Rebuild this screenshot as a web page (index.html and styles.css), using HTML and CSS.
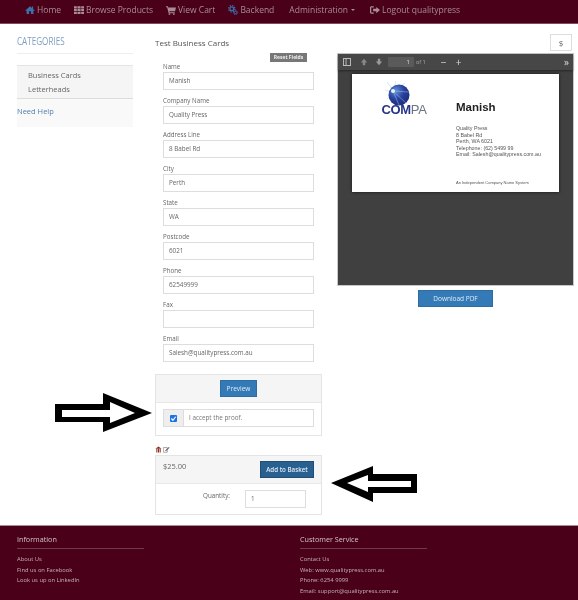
FILE: index.html
```html
<!DOCTYPE html>
<html>
<head>
    <title>Test Business Cards</title>
    <link rel="stylesheet" href="styles.css">
</head>
<body>
    <nav class="topnav">
        <a href="#"><svg class="ico blue" viewBox="0 0 16 16"><path d="M8 2 0 9h2.500v5.500h4V10h3v4.500h4V9H16L13 6.400V2.500h-2v2.200z"/></svg>Home</a>
        <a href="#"><svg class="ico" viewBox="0 0 16 16"><path d="M0 2h4.500v3.500H0zM5.500 2h5v3.500h-5zM11.500 2H16v3.500h-4.500zM0 6.500h4.500V10H0zM5.500 6.500h5V10h-5zM11.500 6.500H16V10h-4.500zM0 11h4.500v3.500H0zM5.500 11h5v3.500h-5zM11.500 11H16v3.500h-4.500z"/></svg>Browse Products</a>
        <a href="#"><svg class="ico" viewBox="0 0 16 16"><path d="M0 2h3l.6 2H16l-1.500 6H5.200l.4 1.500H14V13H4.200L1.800 3.500H0z"/><circle cx="5.500" cy="14.500" r="1.400"/><circle cx="12.500" cy="14.500" r="1.400"/></svg>View Cart</a>
        <a href="#"><svg class="ico cogs" viewBox="0 0 16 16">
            <circle cx="6" cy="6" r="3" fill="none" stroke="#3f6fa8" stroke-width="2"/>
            <circle cx="6" cy="6" r="5" fill="none" stroke="#3f6fa8" stroke-width="2" stroke-dasharray="2 1.930"/>
            <circle cx="12" cy="12" r="2" fill="none" stroke="#3f6fa8" stroke-width="1.500"/>
            <circle cx="12" cy="12" r="3.400" fill="none" stroke="#3f6fa8" stroke-width="1.500" stroke-dasharray="1.500 1.170"/>
        </svg>Backend</a>
        <a href="#" class="admin">Administration <span class="caret"></span></a>
        <a href="#"><svg class="ico" viewBox="0 0 16 16"><path d="M6 2H1.500L0 3.500v9L1.500 14H6v-2H2V4h4z"/><path d="M10 3v3H5v4h5v3l6-5z"/></svg>Logout qualitypress</a>
    </nav>

    <div class="main">
        <aside class="sidebar">
            <h3><span>CATEGORIES</span></h3>
            <div class="side-box">
                <ul class="cat-list">
                    <li>Business Cards</li>
                    <li>Letterheads</li>
                </ul>
                <a href="#" class="need-help">Need Help</a>
            </div>
        </aside>

        <section class="middle">
            <h4>Test Business Cards</h4>
            <div class="reset-row"><span class="reset">Reset Fields</span></div>
            <form class="fields">
                <label>Name<span class="input">Manish</span></label>
                <label>Company Name<span class="input">Quality Press</span></label>
                <label>Address Line<span class="input">8 Babel Rd</span></label>
                <label>City<span class="input">Perth</span></label>
                <label>State<span class="input">WA</span></label>
                <label>Postcode<span class="input">6021</span></label>
                <label>Phone<span class="input">62549999</span></label>
                <label>Fax<span class="input"></span></label>
                <label>Email<span class="input">Salesh@qualitypress.com.au</span></label>
            </form>

            <div class="panel proof">
                <div class="panel-head center"><button class="btn">Preview</button></div>
                <div class="panel-body">
                    <div class="input-group">
                        <span class="addon"><span class="tick">
                            <svg viewBox="0 0 8 8"><path d="M1.500 4 3.300 6 6.500 2" fill="none" stroke="#fff" stroke-width="1.300"/></svg>
                        </span></span>
                        <span class="group-text">I accept the proof.</span>
                    </div>
                </div>
            </div>

            <div class="tiny-icons">
                <svg viewBox="0 0 8 8"><path d="M4 .5 7.500 3H.5zM1.500 3.500h1.200V7.500H1.500zM3.400 3.500h1.200V7.500H3.400zM5.300 3.500h1.200V7.500H5.300z" fill="#8a2a1c"/></svg>
                <svg viewBox="0 0 9 8"><path d="M.5 1.500h5v6h-5z" fill="none" stroke="#777" stroke-width=".8"/><path d="M3 5 7.500.8l1 1L4 6H3z" fill="#666"/></svg>
            </div>
            <div class="panel order">
                <div class="panel-head split">
                    <span class="price">$25.00</span>
                    <button class="btn dark">Add to Basket</button>
                </div>
                <div class="panel-body qty">
                    <span class="qty-label">Quantity:</span>
                    <span class="input qty-input">1</span>
                </div>
            </div>
        </section>

        <section class="right">
            <div class="dollar-row"><span class="dollar">$</span></div>
            <div class="viewer">
                <div class="toolbar">
                    <svg class="tool" viewBox="0 0 10 10"><path fill-rule="evenodd" d="M0 0h10v10H0zM1.200 1.200v7.600h2V1.200zM4.400 1.200v7.600h4.400V1.200z"/></svg>
                    <svg class="tool up" viewBox="0 0 10 10"><path d="M5 1 9 5.500H6.500V9h-3V5.500H1z"/></svg>
                    <svg class="tool down" viewBox="0 0 10 10"><path d="M5 9 9 4.500H6.500V1h-3v3.500H1z"/></svg>
                    <span class="page-box">1</span>
                    <span class="page-of">of 1</span>
                    <span class="zoom-btn">&minus;</span>
                    <span class="zoom-btn">+</span>
                    <span class="more">&raquo;</span>
                </div>
                <div class="pdf-area">
                    <div class="card">
                        <div class="card-logo">
                            <svg viewBox="0 0 28 28" class="globe">
                                <defs>
                                    <radialGradient id="sphere" cx="0.350" cy="0.300" r="0.800">
                                        <stop offset="0" stop-color="#5f8fd8"/>
                                        <stop offset="0.500" stop-color="#27409b"/>
                                        <stop offset="1" stop-color="#1c2a78"/>
                                    </radialGradient>
                                </defs>
                                <path d="M8 10 2 2M7 12 0 10M9 9 11 1M10 10 20 3M7 14 2 19" stroke="#c4dcf2" stroke-width=".7"/>
                                <circle cx="14" cy="15" r="10.500" fill="url(#sphere)"/>
                                <path d="M8 11 21 23M8 11 24 12M8 11 14 25" stroke="#a9c0ea" stroke-width=".5" fill="none"/>
                                <circle cx="8" cy="11" r="2" fill="#e6f3fc"/>
                            </svg>
                            <div class="compa"><b>COM</b><span>PA</span></div>
                        </div>
                        <div class="card-info">
                            <div class="card-name">Manish</div>
                            <div class="card-lines">
                                <div>Quality Press</div>
                                <div>8 Babel Rd</div>
                                <div>Perth, WA 6021</div>
                                <div>Telephone: (62) 5499 99</div>
                                <div>Email: Salesh@qualitypress.com.au</div>
                            </div>
                            <div class="card-foot">An Independent Company Name System</div>
                        </div>
                    </div>
                </div>
            </div>
            <div class="download-row"><button class="btn wide">Download PDF</button></div>
        </section>
    </div>

    <footer class="footer">
        <div class="foot-col">
            <h5>Information</h5>
            <p>About Us</p>
            <p>Find us on Facebook</p>
            <p>Look us up on LinkedIn</p>
        </div>
        <div class="foot-col">
            <h5>Customer Service</h5>
            <p>Contact Us</p>
            <p>Web: www.qualitypress.com.au</p>
            <p>Phone: 6254 9999</p>
            <p>Email: support@qualitypress.com.au</p>
        </div>
    </footer>

    <!-- annotation arrows drawn over the screenshot -->
    <svg class="arrow-layer" viewBox="0 0 578 600">
        <path d="M55 404H103V393L152 413 103 432V422H55Z" fill="#000"/>
        <path d="M62 410H110V402L135 413 110 423V417H62Z" fill="#fff"/>
        <path d="M417 474H373V466L331 483 373 502V493H417Z" fill="#000"/>
        <path d="M411 481H368V475L347 483 368 492V487H411Z" fill="#fff"/>
    </svg>
</body>
</html>
```

FILE: styles.css
```css
html, body {
    margin: 0;
    padding: 0;
    height: 600px;
    overflow: hidden;
}

body {
    position: relative;
    background-color: #fff;
    font-family: "Open Sans", Arial, sans-serif;
    font-size: 7px;
    color: #666;
}

/* the page is a scaled down capture, so everything but the arrows is a bit soft */
.topnav, .main, .footer {
    filter: blur(0.3px);
}

.topnav {
    display: flex;
    align-items: center;
    gap: 13px;
    height: 23px;
    padding-left: 25px;
    background-color: #4a0019;
    border-bottom: 1px solid #83495c;
    font-size: 8.500px;
}

.topnav a {
    display: flex;
    align-items: center;
    gap: 2px;
    margin-top: -4px;
    color: #a98d96;
    text-decoration: none;
    white-space: nowrap;
}

.topnav .admin {
    margin-left: 2px;
    margin-right: 2px;
    gap: 3px;
}

.ico {
    width: 10px;
    height: 10px;
    fill: #a98d96;
}

.ico.blue {
    fill: #3f6fa8;
}

.caret {
    width: 0;
    height: 0;
    border-left: 2px solid transparent;
    border-right: 2px solid transparent;
    border-top: 2px solid #a98d96;
}

.main {
    display: flex;
    height: 501px;
    padding-left: 17px;
    box-sizing: border-box;
}

.sidebar {
    width: 116px;
    margin-right: 22px;
}

.sidebar h3 {
    margin: 11px 0 11px 0;
    padding-bottom: 5px;
    border-bottom: 1px solid #eee;
    font-size: 10px;
    font-weight: 400;
    line-height: 13px;
    color: #7d9fc2;
}

.sidebar h3 span {
    display: inline-block;
    transform: scaleX(0.81);
    transform-origin: left;
}

.side-box {
    height: 62px;
    background-color: #f9f9f9;
}

.cat-list {
    list-style: none;
    margin: 0;
    padding: 2px 0 2px 11px;
    background-color: #f5f5f5;
    border-top: 1px solid #e4e4e4;
    border-bottom: 1px solid #ddd;
    font-size: 7.500px;
    line-height: 14px;
    color: #666;
}

.need-help {
    display: block;
    margin-top: 7px;
    font-size: 7.500px;
    line-height: 11px;
    color: #4f7fae;
    text-decoration: none;
}

.middle {
    width: 167px;
    margin-right: 14px;
}

.middle h4 {
    margin: 13px 0 0 0;
    font-size: 8px;
    font-weight: 400;
    line-height: 11px;
    color: #555;
}

.reset-row {
    display: flex;
    justify-content: flex-end;
    height: 9px;
    margin: 5px 15px 0 0;
}

.reset {
    width: 37px;
    height: 9px;
    background-color: #777;
    color: #eee;
    font-size: 5px;
    font-weight: 700;
    line-height: 9px;
    text-align: center;
}

.fields {
    display: flex;
    flex-direction: column;
    gap: 6px;
    padding: 0 8px;
}

.fields label {
    display: flex;
    flex-direction: column;
    width: 151px;
    height: 28px;
    font-size: 6.200px;
    line-height: 10px;
    color: #666;
}

.input {
    display: block;
    box-sizing: border-box;
    height: 18px;
    padding-left: 5px;
    background-color: #fff;
    border: 1px solid #ddd;
    font-size: 6.300px;
    line-height: 16px;
    color: #666;
}

.panel {
    width: 167px;
    box-sizing: border-box;
    border: 1px solid #e4e4e4;
}

.proof {
    height: 62px;
    margin-top: 12px;
}

.panel-head {
    box-sizing: border-box;
    height: 28px;
    padding: 5px 7px;
    background-color: #f5f5f5;
    border-bottom: 1px solid #e8e8e8;
}

.panel-head.center {
    display: flex;
    justify-content: center;
}

.panel-head.split {
    display: flex;
    justify-content: space-between;
}

.price {
    font-size: 7.500px;
    line-height: 11px;
    color: #666;
}

.btn {
    padding: 0;
    height: 17px;
    width: 37px;
    background-color: #337ab7;
    border: 1px solid #2e6da4;
    color: #dfeaf5;
    font-family: "Open Sans", Arial, sans-serif;
    font-size: 6.500px;
}

.btn.dark {
    width: 54px;
    background-color: #286090;
    border-color: #204d74;
    font-size: 6.200px;
    font-weight: 600;
}

.btn.wide {
    width: 75px;
}

.panel-body {
    padding: 6px 7px;
}

.input-group {
    display: flex;
    height: 18px;
    border: 1px solid #ddd;
    box-sizing: border-box;
}

.addon {
    display: flex;
    align-items: center;
    justify-content: center;
    width: 19px;
    background-color: #eee;
    border-right: 1px solid #ddd;
}

.tick {
    display: block;
    width: 7px;
    height: 7px;
    background-color: #1a73e8;
    border-radius: 1px;
}

.tick svg {
    display: block;
    width: 7px;
    height: 7px;
}

.group-text {
    padding-left: 5px;
    font-size: 6.300px;
    line-height: 16px;
    color: #777;
}

.tiny-icons {
    display: flex;
    gap: 1px;
    height: 8px;
    margin-top: 10px;
    margin-bottom: 1px;
}

.tiny-icons svg {
    width: 7px;
    height: 7px;
}

.order {
    height: 60px;
}

.qty {
    display: flex;
    padding: 6px 15px 0 47px;
    justify-content: space-between;
}

.qty-label {
    font-size: 6.300px;
    line-height: 11px;
    color: #666;
}

.qty-input {
    width: 61px;
}

.right {
    width: 238px;
    margin-left: 1px;
}

.dollar-row {
    display: flex;
    justify-content: flex-end;
    margin: 10px 3px 2px 0;
}

.dollar {
    width: 22px;
    height: 17px;
    box-sizing: border-box;
    border: 1px solid #ddd;
    font-size: 8px;
    line-height: 15px;
    text-align: center;
}

.viewer {
    width: 237px;
    height: 233px;
    box-sizing: border-box;
    border: 1px solid #c8c8c8;
    background-color: #404040;
}

.toolbar {
    display: flex;
    align-items: center;
    height: 16px;
    padding: 0 4px 0 5px;
    background-color: #474747;
    box-shadow: 0 1px 2px rgba(0, 0, 0, 0.4);
    color: #ccc;
}

.tool {
    width: 8px;
    height: 8px;
    margin-right: 9px;
    fill: #bbb;
}

.tool.up {
    margin-right: 7px;
    fill: #888;
}

.tool.down {
    margin-right: 5px;
    fill: #999;
}

.page-box {
    width: 26px;
    height: 10px;
    box-sizing: border-box;
    padding-right: 4px;
    background-color: #5a5a5a;
    border-radius: 1px;
    font-size: 6px;
    line-height: 10px;
    text-align: right;
    color: #ddd;
}

.page-of {
    margin-left: 2px;
    margin-right: 15px;
    font-size: 5.500px;
    color: #aaa;
}

.zoom-btn {
    width: 15px;
    font-size: 10px;
    line-height: 10px;
    color: #ddd;
}

.more {
    margin-left: auto;
    font-size: 10px;
    line-height: 10px;
    color: #ddd;
}

.pdf-area {
    padding: 4px 0 0 14px;
}

.card {
    display: flex;
    width: 207px;
    height: 118px;
    background-color: #fff;
    box-shadow: 0 0 3px rgba(0, 0, 0, 0.7);
    color: #333;
}

.card-logo {
    display: flex;
    flex-direction: column;
    align-items: center;
    width: 104px;
    box-sizing: border-box;
    padding-top: 6px;
}

.globe {
    display: block;
    width: 28px;
    height: 28px;
    margin-right: 11px;
}

.compa {
    margin-top: -4px;
    font-family: "Liberation Sans", Arial, sans-serif;
    font-size: 13px;
    line-height: 12px;
    letter-spacing: -0.3px;
}

.compa b {
    color: #27348b;
}

.compa span {
    color: #6b7385;
}

.card-name {
    margin-top: 26px;
    font-family: "Liberation Sans", Arial, sans-serif;
    font-size: 11.500px;
    font-weight: 700;
    line-height: 14px;
    color: #222;
}

.card-lines {
    margin-top: 11px;
    font-family: "Liberation Sans", Arial, sans-serif;
    font-size: 5.300px;
    line-height: 6.600px;
    color: #555;
}

.card-foot {
    margin-top: 22px;
    font-family: "Liberation Sans", Arial, sans-serif;
    font-size: 4px;
    line-height: 6px;
    color: #555;
}

.download-row {
    display: flex;
    justify-content: center;
    margin-top: 4px;
    width: 237px;
}

.footer {
    display: flex;
    box-sizing: border-box;
    height: 76px;
    padding: 8px 0 0 17px;
    background-color: #4a0019;
    border-top: 1px solid #a98d96;
    color: #c5b3b9;
}

.foot-col {
    flex: none;
    width: 283px;
}

.foot-col h5 {
    width: 127px;
    margin: 0 0 5px 0;
    padding-bottom: 4px;
    border-bottom: 1px solid #6d3b4d;
    font-size: 7.200px;
    font-weight: 400;
    line-height: 10px;
    color: #d3c3c9;
}

.foot-col p {
    margin: 0;
    font-size: 5.800px;
    line-height: 10.700px;
}

.arrow-layer {
    position: absolute;
    left: 0;
    top: 0;
    width: 578px;
    height: 600px;
    pointer-events: none;
}
```
